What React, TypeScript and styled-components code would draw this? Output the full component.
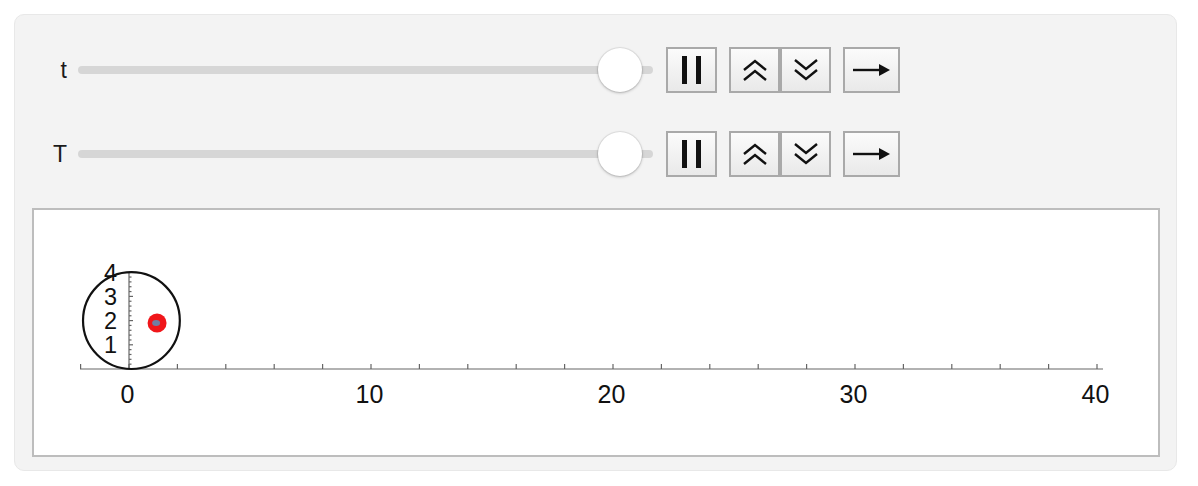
import React from "react";
import styled, { createGlobalStyle } from "styled-components";

const GlobalStyle = createGlobalStyle`
  html, body {
    margin: 0;
    padding: 0;
    background: #ffffff;
  }
  body {
    padding: 14px 0 0 14px;
    font-family: "Liberation Sans", Arial, sans-serif;
  }
`;

// 1 unit on the plot = 24.2px, origin at page (129, 369)
const UNIT = 24.2;
const X0 = 129;
const Y0 = 369;
const px = (x: number) => X0 + x * UNIT;
const py = (y: number) => Y0 - y * UNIT;

const Panel = styled.div`
  width: 1163px;
  height: 457px;
  box-sizing: border-box;
  background: #f3f3f3;
  border: 1px solid #e8e8e8;
  border-radius: 10px;
  padding: 32px 16px 13px 17px;
  display: flex;
  flex-direction: column;
`;

const Controls = styled.div`
  display: flex;
  flex-direction: column;
  gap: 38px;
  margin-bottom: 31px;
`;

const Row = styled.div`
  display: flex;
  align-items: center;
  height: 46px;
`;

const Label = styled.span`
  width: 35px;
  text-align: right;
  font-size: 23px;
  color: #1a1a1a;
  margin-right: 11px;
  line-height: 1;
`;

const Slider = styled.div`
  position: relative;
  width: 575px;
  height: 8px;
  border-radius: 4px;
  background: #d6d6d6;
  margin-right: 13px;
`;

const Thumb = styled.div`
  position: absolute;
  top: 50%;
  width: 44px;
  height: 44px;
  margin-left: -22px;
  margin-top: -22px;
  border-radius: 50%;
  background: #ffffff;
  box-shadow: 0 1px 3px rgba(0, 0, 0, 0.25), 0 0 0 1px rgba(0, 0, 0, 0.06);
`;

const Buttons = styled.div`
  display: flex;
  gap: 12px;
`;

const Group = styled.div`
  display: flex;
`;

const Btn = styled.button<{ $w?: number }>`
  width: ${(p) => p.$w ?? 51}px;
  height: 46px;
  box-sizing: border-box;
  padding: 0;
  border: 2px solid #a9a9a9;
  background: linear-gradient(#fbfbfb, #e9e9e9);
  display: flex;
  align-items: center;
  justify-content: center;
`;

const PauseBars = styled.span`
  display: flex;
  gap: 9px;
  span {
    width: 5px;
    height: 28px;
    background: #111;
  }
`;

const PlotBox = styled.div`
  width: 1128px;
  height: 249px;
  box-sizing: border-box;
  border: 2px solid #bdbdbd;
  background: #ffffff;
`;

const Chevrons = ({ down }: { down?: boolean }) => (
  <svg width="26" height="26" viewBox="0 0 26 26">
    <g
      fill="none"
      stroke="#111"
      strokeWidth="2.4"
      transform={down ? "rotate(180 13 13)" : undefined}
    >
      <polyline points="2,13 13,4 24,13" />
      <polyline points="2,23 13,14 24,23" />
    </g>
  </svg>
);

const Arrow = () => (
  <svg width="40" height="16" viewBox="0 0 40 16">
    <line x1="1" y1="8" x2="30" y2="8" stroke="#111" strokeWidth="2.4" />
    <polygon points="27,2 38,8 27,14" fill="#111" />
  </svg>
);

const ControlRow = ({ name, value }: { name: string; value: number }) => (
  <Row>
    <Label>{name}</Label>
    <Slider>
      <Thumb style={{ left: `${value * 100}%` }} />
    </Slider>
    <Buttons>
      <Btn>
        <PauseBars>
          <span />
          <span />
        </PauseBars>
      </Btn>
      <Group>
        <Btn>
          <Chevrons />
        </Btn>
        <Btn>
          <Chevrons down />
        </Btn>
      </Group>
      <Btn $w={57}>
        <Arrow />
      </Btn>
    </Buttons>
  </Row>
);

const Plot = () => {
  const xTicks: number[] = [];
  for (let k = -2; k <= 40; k += 2) xTicks.push(k);
  const yTicks: number[] = [];
  for (let k = 1; k <= 20; k++) yTicks.push(k * 0.2);

  return (
    <svg width="1124" height="245" viewBox="34 210 1124 245">
      <g stroke="#666" strokeWidth="1.2">
        <line x1={80} y1={Y0} x2={1103} y2={Y0} />
        {xTicks.map((k) => (
          <line key={k} x1={px(k)} y1={Y0} x2={px(k)} y2={Y0 - 5} />
        ))}
        <line x1={X0} y1={Y0} x2={X0} y2={py(4)} />
        {yTicks.map((k, i) => (
          <line
            key={i}
            x1={X0}
            y1={py(k)}
            x2={X0 + ((i + 1) % 5 === 0 ? 4 : 2.5)}
            y2={py(k)}
          />
        ))}
      </g>
      <g fontFamily='"Liberation Sans", Arial, sans-serif' fill="#111">
        {[0, 10, 20, 30, 40].map((v) => (
          <text
            key={v}
            x={px(v) - 1.5}
            y={403}
            fontSize="25"
            textAnchor="middle"
          >
            {v}
          </text>
        ))}
        {[1, 2, 3, 4].map((v) => (
          <text
            key={v}
            x={117}
            y={py(v) + 8.5}
            fontSize="23.5"
            textAnchor="end"
          >
            {v}
          </text>
        ))}
      </g>
      <circle
        cx={px(0.1)}
        cy={py(2)}
        r={2 * UNIT}
        fill="none"
        stroke="#111"
        strokeWidth="2.2"
      />
      <circle cx={px(1.16)} cy={py(1.9)} r={9.5} fill="#f0161a" />
      <ellipse cx={px(1.12)} cy={py(1.9)} rx={4} ry={3} fill="#6f7fa3" />
    </svg>
  );
};

export default function App() {
  return (
    <>
      <GlobalStyle />
      <Panel>
        <Controls>
          <ControlRow name="t" value={0.943} />
          <ControlRow name="T" value={0.943} />
        </Controls>
        <PlotBox>
          <Plot />
        </PlotBox>
      </Panel>
    </>
  );
}
